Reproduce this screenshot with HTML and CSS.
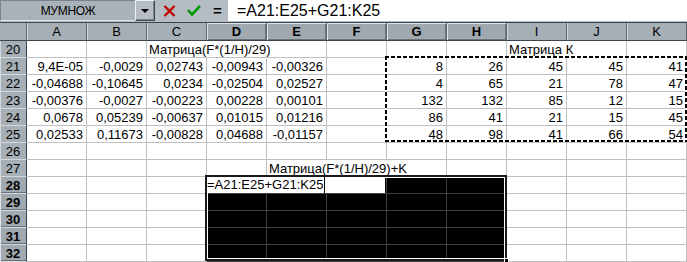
FILE: index.html
```html
<!DOCTYPE html>
<html>
<head>
<meta charset="utf-8">
<link rel="stylesheet" href="styles.css">
</head>
<body>
<div class="app">
  <div class="fbar">
    <div class="namebox">МУМНОЖ</div>
    <div class="ddbtn"><span class="tri"></span></div>
    <div class="fbtns">
      <svg class="ic-x" width="13" height="12" viewBox="0 0 13 12"><path d="M1.5 1 L11.5 11 M11.5 1 L1.5 11" stroke="#c00000" stroke-width="2.4" fill="none"/></svg>
      <svg class="ic-ok" width="14" height="11" viewBox="0 0 14 11"><path d="M1 5 L5 9.5 L13 1" stroke="#009a00" stroke-width="2.6" fill="none"/></svg>
      <span class="eq">=</span>
    </div>
    <div class="formula">=A21:E25+G21:K25</div>
  </div>
  <div class="sheet">
    <div class="grid">
      <div class="hd corner"></div>
      <div class="hd">A</div><div class="hd">B</div><div class="hd">C</div><div class="hd on">D</div><div class="hd on">E</div><div class="hd on">F</div><div class="hd on">G</div><div class="hd on">H</div><div class="hd">I</div><div class="hd">J</div><div class="hd">K</div>

      <div class="rh">20</div>
      <div class="c"></div><div class="c"></div><div class="c l nb">Матрица(F*(1/H)/29)</div><div class="c nb"></div><div class="c"></div><div class="c"></div><div class="c"></div><div class="c"></div><div class="c l nb">Матрица К</div><div class="c"></div><div class="c"></div>

      <div class="rh">21</div>
      <div class="c">9,4E-05</div><div class="c">-0,0029</div><div class="c">0,02743</div><div class="c">-0,00943</div><div class="c">-0,00326</div><div class="c"></div><div class="c">8</div><div class="c">26</div><div class="c">45</div><div class="c">45</div><div class="c">41</div>

      <div class="rh">22</div>
      <div class="c">-0,04688</div><div class="c">-0,10645</div><div class="c">0,0234</div><div class="c">-0,02504</div><div class="c">0,02527</div><div class="c"></div><div class="c">4</div><div class="c">65</div><div class="c">21</div><div class="c">78</div><div class="c">47</div>

      <div class="rh">23</div>
      <div class="c">-0,00376</div><div class="c">-0,0027</div><div class="c">-0,00223</div><div class="c">0,00228</div><div class="c">0,00101</div><div class="c"></div><div class="c">132</div><div class="c">132</div><div class="c">85</div><div class="c">12</div><div class="c">15</div>

      <div class="rh">24</div>
      <div class="c">0,0678</div><div class="c">0,05239</div><div class="c">-0,00637</div><div class="c">0,01015</div><div class="c">0,01216</div><div class="c"></div><div class="c">86</div><div class="c">41</div><div class="c">21</div><div class="c">15</div><div class="c">45</div>

      <div class="rh">25</div>
      <div class="c">0,02533</div><div class="c">0,11673</div><div class="c">-0,00828</div><div class="c">0,04688</div><div class="c">-0,01157</div><div class="c"></div><div class="c">48</div><div class="c">98</div><div class="c">41</div><div class="c">66</div><div class="c">54</div>

      <div class="rh">26</div>
      <div class="c"></div><div class="c"></div><div class="c"></div><div class="c"></div><div class="c"></div><div class="c"></div><div class="c"></div><div class="c"></div><div class="c"></div><div class="c"></div><div class="c"></div>

      <div class="rh">27</div>
      <div class="c"></div><div class="c"></div><div class="c"></div><div class="c"></div><div class="c l nb">Матрица(F*(1/H)/29)+K</div><div class="c nb"></div><div class="c"></div><div class="c"></div><div class="c"></div><div class="c"></div><div class="c"></div>

      <div class="rh on">28</div>
      <div class="c"></div><div class="c"></div><div class="c"></div><div class="c k"></div><div class="c k"></div><div class="c k"></div><div class="c k"></div><div class="c k"></div><div class="c"></div><div class="c"></div><div class="c"></div>

      <div class="rh on">29</div>
      <div class="c"></div><div class="c"></div><div class="c"></div><div class="c k"></div><div class="c k"></div><div class="c k"></div><div class="c k"></div><div class="c k"></div><div class="c"></div><div class="c"></div><div class="c"></div>

      <div class="rh on">30</div>
      <div class="c"></div><div class="c"></div><div class="c"></div><div class="c k"></div><div class="c k"></div><div class="c k"></div><div class="c k"></div><div class="c k"></div><div class="c"></div><div class="c"></div><div class="c"></div>

      <div class="rh on">31</div>
      <div class="c"></div><div class="c"></div><div class="c"></div><div class="c k"></div><div class="c k"></div><div class="c k"></div><div class="c k"></div><div class="c k"></div><div class="c"></div><div class="c"></div><div class="c"></div>

      <div class="rh on">32</div>
      <div class="c"></div><div class="c"></div><div class="c"></div><div class="c k"></div><div class="c k"></div><div class="c k"></div><div class="c k"></div><div class="c k"></div><div class="c"></div><div class="c"></div><div class="c"></div>
    </div>
    <div class="ants"></div>
    <div class="sel"><div class="handle"></div></div>
    <div class="edit">=A21:E25+G21:K25<span class="caret"></span></div>
  </div>
</div>
</body>
</html>
```

FILE: styles.css
```css
* { box-sizing: border-box; }
html, body { margin: 0; padding: 0; background: #fff; }
body {
  width: 687px;
  height: 262px;
  overflow: hidden;
  font-family: "Liberation Sans", Arial, sans-serif;
  font-size: 13px;
  color: #000;
}
.app { width: 687px; }

/* formula bar */
.fbar {
  display: flex;
  height: 23px;
  background: #b5bcc4;
  border-bottom: 1px solid #3d444b;
}
.namebox {
  width: 135px;
  height: 21px;
  display: flex;
  align-items: center;
  justify-content: center;
  background: #a9b1b9;
  border-top: 1px solid #7a828a;
  border-left: 1px solid #7a828a;
  border-bottom: 1px solid #dde2e6;
  font-size: 12px;
  letter-spacing: -0.3px;
  padding-top: 1px;
}
.ddbtn {
  width: 20px;
  height: 21px;
  display: flex;
  align-items: center;
  justify-content: center;
  background: #b5bcc4;
  border-top: 1px solid #eef1f3;
  border-left: 1px solid #eef1f3;
  border-right: 1px solid #3d444b;
  border-bottom: 1px solid #3d444b;
  box-shadow: inset -1px -1px 0 #7f878f;
}
.tri {
  width: 0;
  height: 0;
  border-left: 4px solid transparent;
  border-right: 4px solid transparent;
  border-top: 4px solid #000;
}
.fbtns {
  width: 73px;
  height: 21px;
  display: flex;
  align-items: center;
  padding-left: 8px;
}
.ic-x { margin-right: 11px; }
.ic-ok { margin-right: 12px; margin-top: 0px; }
.eq {
  font-weight: bold;
  font-size: 15px;
  line-height: 15px;
}
.formula {
  flex: 1;
  height: 21px;
  background: #fff;
  font-size: 16px;
  line-height: 21px;
  padding-left: 9px;
  white-space: nowrap;
}

/* sheet */
.sheet { position: relative; }
.grid {
  display: grid;
  grid-template-columns: 27px repeat(11, 60px);
  grid-template-rows: 18px repeat(13, 17px);
  background: #fff;
}
.hd {
  background: #a6aeb6;
  border-right: 1px solid #5f676f;
  border-bottom: 1px solid #3d444b;
  box-shadow: inset 1px 0 0 #d3d8dc;
  text-align: center;
  line-height: 17px;
}
.hd.corner { box-shadow: none; }
.hd.on {
  font-weight: bold;
  background: #a0a8b0;
  box-shadow: inset 1px 1px 0 #dfe3e6, inset -1px -1px 0 #6a727a;
}
.rh {
  background: #a6aeb6;
  border-right: 1px solid #3d444b;
  border-bottom: 1px solid #d3d8dc;
  box-shadow: inset 1px 0 0 #d3d8dc;
  text-align: center;
  line-height: 16px;
  padding-top: 1px;
}
.rh.on {
  font-weight: bold;
  background: #a0a8b0;
  box-shadow: inset 1px 0 0 #dfe3e6, inset 0 -1px 0 #6a727a;
}
.c {
  border-right: 1px solid #c0c0c0;
  border-bottom: 1px solid #c0c0c0;
  text-align: right;
  padding-right: 3px;
  line-height: 16px;
  padding-top: 1px;
  white-space: nowrap;
}
.c.l { text-align: left; padding-left: 2px; padding-right: 0; }
.c.nb { border-right-color: transparent; }
.c.k {
  background: #000;
  border-right-color: #404040;
  border-bottom-color: #404040;
}

/* copy marquee around G21:K25 */
.ants {
  position: absolute;
  left: 385px;
  top: 33px;
  width: 302px;
  height: 86px;
  background:
    repeating-linear-gradient(90deg, #000 0 4px, #fff 4px 6px) left top / 100% 2px no-repeat,
    repeating-linear-gradient(90deg, #000 0 4px, #fff 4px 6px) left bottom / 100% 2px no-repeat,
    repeating-linear-gradient(180deg, #000 0 4px, #fff 4px 6px) left top / 2px 100% no-repeat,
    repeating-linear-gradient(180deg, #000 0 4px, #fff 4px 6px) right top / 2px 100% no-repeat;
}

/* selection D28:H32 */
.sel {
  position: absolute;
  left: 205px;
  top: 152px;
  width: 302px;
  height: 86px;
  border: 2px solid #1a1a1a;
  box-shadow: inset 0 0 0 1px #fff;
}
.handle {
  position: absolute;
  right: -4px;
  bottom: -4px;
  width: 5px;
  height: 5px;
  background: #000;
  border: 1px solid #fff;
}
.edit {
  position: absolute;
  left: 207px;
  top: 154px;
  width: 178px;
  height: 16px;
  background: #fff;
  line-height: 16px;
  padding-left: 0;
  white-space: nowrap;
}
.caret {
  display: inline-block;
  width: 1px;
  height: 16px;
  background: #000;
  vertical-align: top;
  margin-left: 1px;
}
```
